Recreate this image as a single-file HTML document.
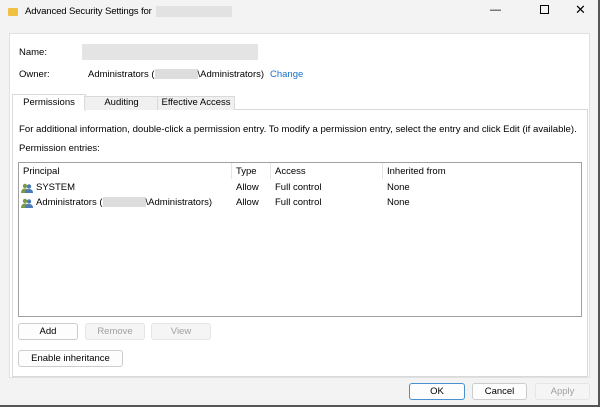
<!DOCTYPE html><html><head><style>
body{margin:0;width:600px;height:407px;overflow:hidden;background:#f3f3f3;font-family:"Liberation Sans",sans-serif;font-size:9.5px;color:#000;position:relative}
.a{position:absolute}
.blur{position:absolute;background:#ddd;opacity:.8}
.btn{position:absolute;border:1px solid #ccc;background:#fdfdfd;border-radius:3px;text-align:center;box-sizing:border-box;line-height:15px}
.dis{color:#a0a0a0;background:#f5f5f5;border-color:#e5e5e5}
.ic{position:absolute;width:12px;height:10px}
</style></head><body>
<div class="a" style="left:0;top:0;width:598px;height:405px;border-right:2px solid #555;border-bottom:2px solid #555;box-sizing:content-box"></div>
<div class="a" style="left:8px;top:8px;width:10px;height:8px;background:#f0c040;border-radius:1px"></div>
<div class="a" style="left:25px;top:6px;font-size:9.6px;letter-spacing:-0.15px">Advanced Security Settings for</div>
<div class="blur" style="left:156px;top:6px;width:76px;height:11px"></div>
<div class="a" style="left:490px;top:4px;font-size:11px">&#8212;</div>
<div class="a" style="left:540px;top:5px;width:7px;height:7px;border:1px solid #000"></div>
<div class="a" style="left:575px;top:2px;font-size:13px">&#10005;</div>
<div class="a" style="left:9px;top:33px;width:581px;height:345px;background:#fff;border:1px solid #e0e0e0;box-sizing:border-box"></div>
<div class="a" style="left:19px;top:47px">Name:</div>
<div class="blur" style="left:82px;top:44px;width:176px;height:16px"></div>
<div class="a" style="left:19px;top:69px">Owner:</div>
<div class="a" style="left:88px;top:69px">Administrators (<span style="display:inline-block;width:43px;height:10px;background:#ddd;vertical-align:middle"></span>\Administrators)</div>
<div class="a" style="left:270px;top:69px;color:#1a6fc8">Change</div>
<div class="a" style="left:12px;top:109px;width:574px;height:266px;border:1px solid #d9d9d9;border-top:1px solid #d9d9d9"></div>
<div class="a" style="left:12px;top:94px;width:72px;height:16px;background:#fff;border:1px solid #d9d9d9;border-bottom:none;text-align:center;line-height:15px">Permissions</div>
<div class="a" style="left:84px;top:96px;width:73px;height:13px;background:#f0f0f0;border:1px solid #d9d9d9;border-bottom:none;text-align:center;line-height:12px">Auditing</div>
<div class="a" style="left:157px;top:96px;width:76px;height:13px;background:#f0f0f0;border:1px solid #d9d9d9;border-bottom:none;text-align:center;line-height:12px">Effective Access</div>
<div class="a" style="left:19px;top:124px;font-size:9.6px">For additional information, double-click a permission entry. To modify a permission entry, select the entry and click Edit (if available).</div>
<div class="a" style="left:19px;top:143px">Permission entries:</div>
<div class="a" style="left:18px;top:162px;width:564px;height:155px;border:1px solid #a0a0a0;box-sizing:border-box"></div>
<div class="a" style="left:231px;top:163px;width:1px;height:16px;background:#e5e5e5"></div>
<div class="a" style="left:270px;top:163px;width:1px;height:16px;background:#e5e5e5"></div>
<div class="a" style="left:382px;top:163px;width:1px;height:16px;background:#e5e5e5"></div>
<div class="a" style="left:23px;top:166px">Principal</div>
<div class="a" style="left:236px;top:166px">Type</div>
<div class="a" style="left:275px;top:166px">Access</div>
<div class="a" style="left:387px;top:166px">Inherited from</div>
<svg class="ic" style="left:21px;top:183px" viewBox="0 0 12 10"><circle cx="4" cy="3" r="2.2" fill="#7a9a4a"/><path d="M0 10 Q0 5.5 4 5.5 Q8 5.5 8 10Z" fill="#7a9a4a"/><circle cx="8" cy="3.5" r="2.2" fill="#4a7ab8"/><path d="M4 10 Q4 6 8 6 Q12 6 12 10Z" fill="#4a7ab8"/></svg>
<svg class="ic" style="left:21px;top:198px" viewBox="0 0 12 10"><circle cx="4" cy="3" r="2.2" fill="#7a9a4a"/><path d="M0 10 Q0 5.5 4 5.5 Q8 5.5 8 10Z" fill="#7a9a4a"/><circle cx="8" cy="3.5" r="2.2" fill="#4a7ab8"/><path d="M4 10 Q4 6 8 6 Q12 6 12 10Z" fill="#4a7ab8"/></svg>
<div class="a" style="left:36px;top:182px">SYSTEM</div>
<div class="a" style="left:236px;top:182px">Allow</div>
<div class="a" style="left:275px;top:182px">Full control</div>
<div class="a" style="left:387px;top:182px">None</div>
<div class="a" style="left:36px;top:197px">Administrators (<span style="display:inline-block;width:43px;height:10px;background:#ddd;vertical-align:middle"></span>\Administrators)</div>
<div class="a" style="left:236px;top:197px">Allow</div>
<div class="a" style="left:275px;top:197px">Full control</div>
<div class="a" style="left:387px;top:197px">None</div>
<div class="btn" style="left:18px;top:323px;width:60px;height:17px">Add</div>
<div class="btn dis" style="left:85px;top:323px;width:60px;height:17px">Remove</div>
<div class="btn dis" style="left:151px;top:323px;width:60px;height:17px">View</div>
<div class="btn" style="left:18px;top:350px;width:105px;height:17px">Enable inheritance</div>
<div class="btn" style="left:409px;top:383px;width:56px;height:17px;border:1px solid #4a8fd0">OK</div>
<div class="btn" style="left:472px;top:383px;width:55px;height:17px">Cancel</div>
<div class="btn dis" style="left:535px;top:383px;width:55px;height:17px">Apply</div>
</body></html>
